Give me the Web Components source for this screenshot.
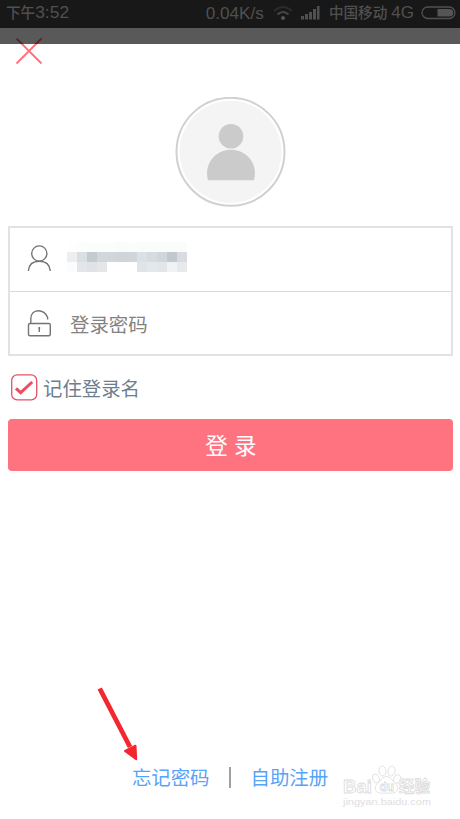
<!DOCTYPE html>
<html lang="zh-CN">
<head>
<meta charset="utf-8">
<title>登录</title>
<style>
  body {
    margin: 0;
    background: #fff;
    font-family: "Liberation Sans", "Noto Sans CJK SC", sans-serif;
  }
</style>
</head>
<body>
<login-page></login-page>

<script>
// Small helper: every element just renders static markup in an open root
class BaseElement extends HTMLElement {
  constructor() {
    super();
    this.attachShadow({ mode: 'open' });
    this.shadowRoot.innerHTML = this.template();
  }
}

class StatusBar extends BaseElement {
  template() {
    return `
      <style>
        :host {
          display: flex;
          align-items: center;
          box-sizing: border-box;
          height: 28px;
          padding: 0 4px 3px 6px;
          background: #181818;
          color: #505050;
          font-size: 17.4px;
          line-height: 24px;
          white-space: nowrap;
        }
        .cjk { font-size: 14.6px; font-weight: 500; }
        .speed { margin-left: auto; font-size: 17.2px; }
        .wifi { margin-left: 9px; }
        .signal { margin: 0 9px 0 8px; }
        .net { margin-left: 4px; font-size: 17px; }
        .battery { margin-left: 7px; }
        svg { display: block; flex: none; }
      </style>
      <span><span class="cjk">下午</span>3:52</span>
      <span class="speed">0.04K/s</span>
      <svg class="wifi" width="20" height="16" viewBox="0 0 20 16" fill="none" stroke-width="2">
        <path d="M1 6Q10-2 19 6" stroke="#2b2b2b"/>
        <path d="M4.500 9.500Q10 4.500 15.500 9.500" stroke="#484848"/>
        <circle cx="10" cy="13" r="2" fill="#555"/>
      </svg>
      <svg class="signal" width="19" height="15" viewBox="0 0 19 15" fill="#505050">
        <path d="M0 11h3v3.500H0zM4 9h3v5.500H4zM8 7h3v7.500H8zM12 4h3v10.500h-3zM16 1h2.500v13.500H16z"/>
      </svg>
      <span class="cjk">中国移动</span>
      <span class="net">4G</span>
      <svg class="battery" width="35" height="14" viewBox="0 0 35 14">
        <rect x="1" y="1" width="33" height="11.500" rx="5.750" fill="none" stroke="#505050" stroke-width="1.300"/>
        <path d="M16.500 3H28.500a3.800 3.800 0 0 1 0 7.600H16.500z" fill="#555"/>
      </svg>`;
  }
}

class UserAvatar extends BaseElement {
  template() {
    return `
      <style>
        :host { display: block; width: 111px; height: 110px; }
        svg { display: block; }
      </style>
      <svg width="111" height="110" viewBox="-.5 .2 111 110">
        <circle cx="55" cy="55" r="54" fill="#fff" stroke="#d0d0d0" stroke-width="2"/>
        <circle cx="55" cy="55" r="51" fill="#f4f4f4"/>
        <circle cx="55.500" cy="39.500" r="12.300" fill="#cbcbcb"/>
        <path d="M32.500 83.500C28 67 40 53 55.500 53S83 67 78.500 83.500z" fill="#cbcbcb"/>
      </svg>`;
  }
}

class FieldRow extends BaseElement {
  template() {
    return `
      <style>
        :host {
          display: flex;
          align-items: center;
          height: 63px;
          color: #828282;
          font-size: 19.4px;
        }
        .icon { flex: none; width: 60px; height: 63px; }
      </style>
      <span class="icon"><slot name="icon"></slot></span>
      <slot></slot>`;
  }
}

// Blurred-out user name, drawn as 10px blocks
class MaskedName extends BaseElement {
  template() {
    const rows = [
      ['fefefe', 'fcfdfd', 'fbfcfc', 'fbfcfc', 'fbfcfc', 'fafbfb', 'fbfcfc', 'fafcfb', 'fafcfb', 'fafcfb', 'fafcfb', 'fafcfb'],
      ['edeeef', 'dadfe2', 'c3cad0', 'd1d7db', 'd1d6da', 'cfd4d8', 'd0d5d9', 'dae0e3', 'd5dbdf', 'd0d6db', 'c1c8cf', 'd8dce2'],
      ['fcfcfc', 'e2e6e9', 'dfe3e6', 'e3e7ea', 'ffffff', 'ffffff', 'ffffff', 'e0e4e7', 'e5e8eb', 'e2e6e9', 'f1f2f5', 'e7e9ed']
    ];
    const cells = rows.flat().map(c => `<i style="background:#${c}"></i>`).join('');
    return `
      <style>
        :host {
          display: grid;
          grid-template-columns: repeat(12, 10px);
          grid-auto-rows: 10px;
          margin: 0 0 5px -3px;
        }
      </style>
      ${cells}`;
  }
}

class CheckOption extends BaseElement {
  template() {
    return `
      <style>
        :host {
          display: flex;
          align-items: center;
          gap: 5px;
          height: 28px;
          color: #6c7e8f;
          font-size: 19.4px;
          line-height: 28px;
        }
        svg { display: block; }
        span { padding-top: 3px; }
      </style>
      <svg width="27" height="27" viewBox="0 0 27 27" fill="none">
        <rect x=".7" y=".9" width="25" height="25" rx="5.500" stroke="#e45263" stroke-width="1.300"/>
        <path d="M5 14.300l4.700 4.300L21.200 8" stroke="#ee4d60" stroke-width="3"/>
      </svg>
      <span><slot></slot></span>`;
  }
}

class PrimaryButton extends BaseElement {
  template() {
    return `
      <style>
        :host { display: block; }
        button {
          display: block;
          width: 100%;
          height: 52px;
          padding: 3px 0 0 1px;
          border: 0;
          border-radius: 4px;
          background: #ff7380;
          color: #fff;
          font: 22.5px/49px "Liberation Sans", "Noto Sans CJK SC", sans-serif;
        }
      </style>
      <button><slot></slot></button>`;
  }
}

class FooterLinks extends BaseElement {
  template() {
    return `
      <style>
        :host {
          display: flex;
          align-items: center;
          justify-content: center;
          height: 28px;
          color: #57a3fa;
          font-size: 19.4px;
          line-height: 28px;
        }
        .divider { width: 2px; height: 21px; margin: 0 19.5px 2px; background: #a0a0a0; }
      </style>
      <slot name="left"></slot>
      <span class="divider"></span>
      <slot name="right"></slot>`;
  }
}

class PointerArrow extends BaseElement {
  template() {
    return `
      <style>
        :host { display: block; width: 42px; height: 76px; }
        svg { display: block; }
      </style>
      <svg width="42" height="76" viewBox="0 0 42 76" fill="#f4262f" stroke="#f4262f">
        <path d="M2.700 1.500L33 60" stroke-width="4.800"/>
        <path d="M28 64l10.500-5.300.7 13.500z" stroke-width="2" stroke-linejoin="round"/>
      </svg>`;
  }
}

class WaterMark extends BaseElement {
  template() {
    return `
      <style>
        :host { display: block; width: 94px; height: 46px; }
        svg { display: block; }
        text { font-family: "Liberation Sans", "Noto Sans CJK SC", sans-serif; }
      </style>
      <svg width="94" height="46" viewBox="0 0 94 46" fill="#fff" stroke="#dcdcdc" stroke-width=".8">
        <text x="2" y="29.500" font-size="17.500" font-weight="700" textLength="29" lengthAdjust="spacingAndGlyphs">Bai</text>
        <ellipse cx="35" cy="15.500" rx="3.200" ry="4.500" transform="rotate(-20 35 15.500)"/>
        <ellipse cx="41.500" cy="8" rx="3.500" ry="5" transform="rotate(-5 41.500 8)"/>
        <ellipse cx="50.500" cy="8" rx="3.500" ry="5" transform="rotate(12 50.500 8)"/>
        <ellipse cx="56" cy="16" rx="3.200" ry="4.500" transform="rotate(20 56 16)"/>
        <path d="M45.500 13.500c3.500 0 5 3 7 5 3 3 5 4.500 4 8-1 3.500-4.500 4-11 3.500-6.500.5-10 0-11-3.500-1-3.500 1-5 4-8 2-2 3.500-5 7-5z"/>
        <text x="38.500" y="27.500" font-size="13" font-weight="700" textLength="14.500" lengthAdjust="spacingAndGlyphs">du</text>
        <text x="58" y="28.700" font-size="15.500" font-weight="700" textLength="31">经验</text>
        <text x="2" y="42" font-size="9" textLength="88" lengthAdjust="spacingAndGlyphs" fill="#dedede" stroke="none">jingyan.baidu.com</text>
      </svg>`;
  }
}

class LoginPage extends BaseElement {
  template() {
    return `
      <style>
        :host {
          display: flex;
          flex-direction: column;
          position: relative;
          box-sizing: border-box;
          width: 460px;
          height: 819px;
          overflow: hidden;
          background: #fff;
        }
        /* translucent strip lies over the top of the page and its close icon */
        .shade {
          position: absolute;
          top: 28px;
          left: 0;
          width: 100%;
          height: 16px;
          background: rgba(0, 0, 0, .65);
        }
        svg { display: block; }
        .close { margin: 9px 0 0 15px; }
        user-avatar { margin: 32px 0 0 175px; }
        .fields {
          margin: 19px 7px 0 8px;
          border: 2px solid #e2e2e2;
        }
        .fields field-row:first-child { border-bottom: 1px solid #dadada; }
        .fields field-row:last-child { height: 62px; }
        check-option { margin: 17px 0 0 11px; }
        primary-button { margin: 18px 7px 0 8px; }
        footer-links { margin: auto 0 27px; }
        pointer-arrow { position: absolute; left: 97px; top: 687px; }
        water-mark { position: absolute; left: 341px; top: 763px; }
      </style>
      <status-bar></status-bar>
      <svg class="close" width="28" height="28" viewBox="0 0 28 28" stroke="#ff7078" stroke-width="1.800">
        <path d="M1.500 1.500l25 25M26.500 1.500l-25 25"/>
      </svg>
      <div class="shade"></div>
      <user-avatar></user-avatar>
      <div class="fields">
        <field-row>
          <svg slot="icon" width="60" height="63" viewBox="0 0 60 63" fill="none" stroke="#747474" stroke-width="1.400">
            <circle cx="29.300" cy="25.500" r="7.600"/>
            <path d="M18.300 43c.5-6.500 4.500-9.800 11-9.800s10.500 3.300 11 9.800"/>
          </svg>
          <masked-name></masked-name>
        </field-row>
        <field-row>
          <svg slot="icon" width="60" height="63" viewBox="0 0 60 63" fill="none" stroke="#747474" stroke-width="1.400">
            <rect x="18.500" y="31.500" width="21.800" height="12.300" rx="1.500"/>
            <path d="M20.800 31.500v-4.500c0-11 14-10.500 16.800-1.500v2"/>
            <circle cx="29.300" cy="36" r="1" fill="#747474" stroke="none"/>
            <path d="M29.300 35.500v4.500"/>
          </svg>
          登录密码
        </field-row>
      </div>
      <check-option>记住登录名</check-option>
      <primary-button>登 录</primary-button>
      <footer-links>
        <span slot="left">忘记密码</span>
        <span slot="right">自助注册</span>
      </footer-links>
      <pointer-arrow></pointer-arrow>
      <water-mark></water-mark>`;
  }
}

// Register custom elements
customElements.define('status-bar', StatusBar);
customElements.define('user-avatar', UserAvatar);
customElements.define('field-row', FieldRow);
customElements.define('masked-name', MaskedName);
customElements.define('check-option', CheckOption);
customElements.define('primary-button', PrimaryButton);
customElements.define('footer-links', FooterLinks);
customElements.define('pointer-arrow', PointerArrow);
customElements.define('water-mark', WaterMark);
customElements.define('login-page', LoginPage);
</script>
</body>
</html>
